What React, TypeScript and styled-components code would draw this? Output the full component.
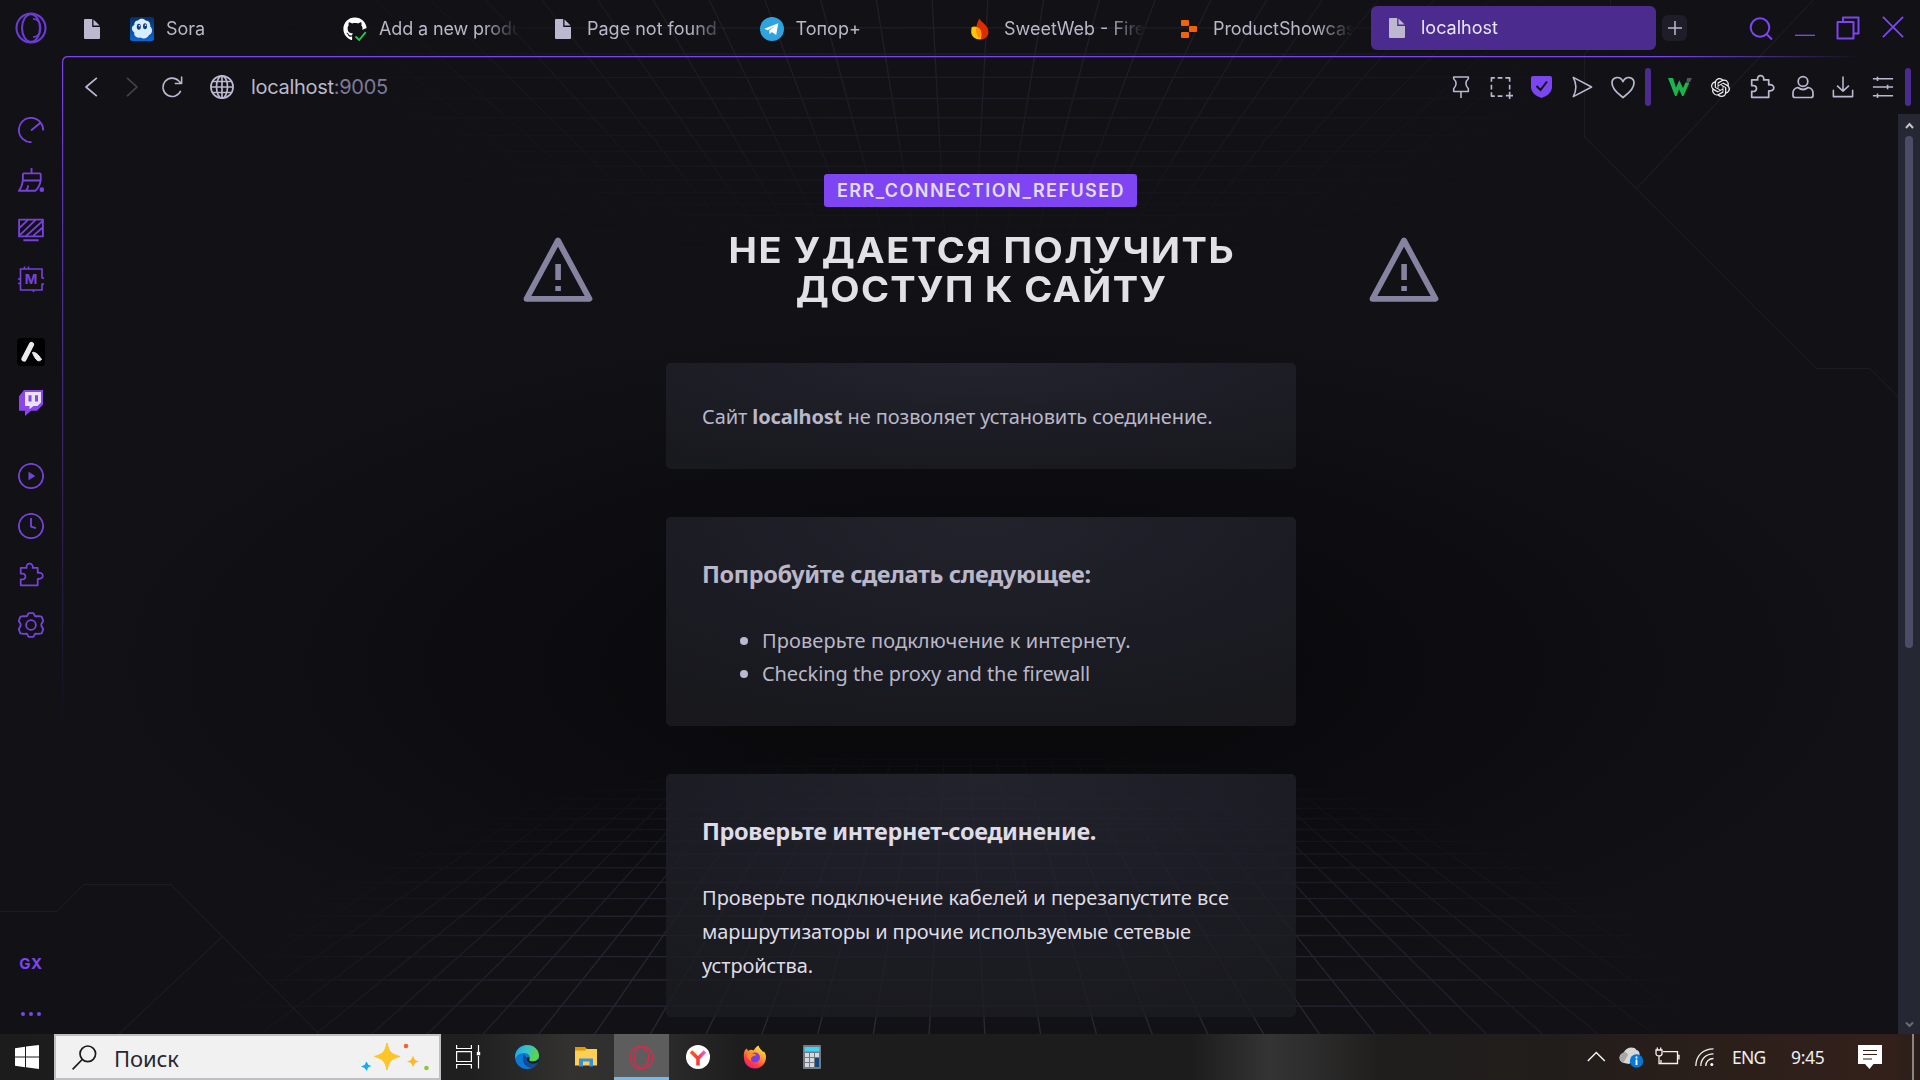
import React from 'react';
import styled, { createGlobalStyle, css } from 'styled-components';
import { FaGithub } from 'react-icons/fa';
import { SiOpenai } from 'react-icons/si';

const violet = '#7b45f2';
const silver = '#bbb8cf';
const ui = "Inter, 'Liberation Sans', sans-serif";
const body = "'Noto Sans', 'Open Sans', sans-serif";

const Global = createGlobalStyle`
  html, body { margin: 0; padding: 0; background: #121116; overflow: hidden; }
  * { box-sizing: border-box; }
  svg { display: block; flex: none; }
`;

const Screen = styled.div`
  position: relative;
  width: 1920px;
  height: 1080px;
  display: flex;
  flex-direction: column;
  overflow: hidden;
  background: #121116;
  font-family: ${ui};
`;

const Backdrop = styled.svg`
  position: absolute;
  left: 0;
  top: 0;
`;

const TabBar = styled.header`
  position: relative;
  display: flex;
  height: 56px;
  flex: none;
  padding: 6px 16px 0 15px;
  align-items: flex-start;
`;

const LogoButton = styled.div`
  width: 65px;
  padding-top: 6px;
`;

const PinnedTab = styled.div`
  width: 50px;
  height: 46px;
  padding-left: 4px;
  display: flex;
  align-items: center;
`;

const Tab = styled.div<{ $w: number; $active?: boolean }>`
  width: ${p => p.$w}px;
  height: ${p => (p.$active ? 44 : 46)}px;
  display: flex;
  align-items: center;
  gap: 12px;
  ${p =>
    p.$active &&
    css`
      background: #4c2b8f;
      border-radius: 6px;
      padding-left: 14px;
    `}
`;

const TabIcon = styled.div`
  width: 24px;
  height: 24px;
  display: flex;
  align-items: center;
  justify-content: center;
`;

const TabTitle = styled.span<{ $active?: boolean; $ls?: number }>`
  width: ${p => (p.$active ? 200 : 140)}px;
  flex: none;
  white-space: nowrap;
  font-size: 18px;
  line-height: 24px;
  letter-spacing: ${p => p.$ls ?? 0}px;
  color: ${p => (p.$active ? '#e9e6f5' : '#b9b7c8')};
  mask-image: linear-gradient(90deg, #000 calc(100% - 36px), transparent);
`;

const NewTab = styled.div`
  width: 25px;
  height: 26px;
  margin: 9px 0 0 6px;
  border-radius: 6px;
  background: #1e1d28;
  display: flex;
  align-items: center;
  justify-content: center;
`;

const WindowControls = styled.div`
  display: flex;
  margin-left: auto;
  padding-top: 10px;
  gap: 21.6px;
`;

const Middle = styled.div`
  position: relative;
  display: flex;
  height: 978px;
  flex: none;
`;

const Sidebar = styled.nav`
  width: 62px;
  padding-top: 61px;
  display: flex;
  flex-direction: column;
  align-items: center;
`;

const SideItem = styled.div<{ $h?: number }>`
  height: ${p => p.$h ?? 50}px;
  width: 30px;
  flex: none;
  display: flex;
  align-items: flex-start;
  justify-content: center;
`;

const SideLabel = styled.div`
  margin-top: auto;
  font: 700 15px/16px ${ui};
  letter-spacing: 0.6px;
  color: ${violet};
`;

const Dots = styled.div`
  display: flex;
  gap: 3.5px;
  padding: 40px 0 18px;
  i { width: 4.4px; height: 4.4px; border-radius: 50%; background: ${violet}; }
`;

const Frame = styled.svg`
  position: absolute;
  left: 62px;
  top: 0;
`;

const Page = styled.main`
  flex: 1;
  display: flex;
  flex-direction: column;
`;

const Toolbar = styled.div`
  height: 58px;
  flex: none;
  display: flex;
  align-items: center;
  padding: 4px 9px 0 19px;
`;

const Address = styled.div`
  flex: 1;
  margin-left: -11px;
  padding-bottom: 1px;
  font-size: 20px;
  line-height: 26px;
  letter-spacing: -0.3px;
  color: #bbb9cc;
  span { color: #7d7a99; }
`;

const ToolSlot = styled.div<{ $w: number }>`
  width: ${p => p.$w}px;
  display: flex;
  justify-content: center;
`;

const Separator = styled.div`
  width: 6px;
  height: 38px;
  border-radius: 3px;
  background: #4c2b8f;
`;

const Viewport = styled.div`
  flex: 1;
  display: flex;
  min-height: 0;
`;

const Content = styled.section`
  width: 1836px;
  display: flex;
  flex-direction: column;
  align-items: center;
  padding: 60px 0 0 2px;
`;

const ErrorCode = styled.div`
  width: 313px;
  height: 33px;
  margin-right: 1px;
  border-radius: 3px;
  background: #7f45f3;
  color: #e2dcf7;
  font: 600 18px/34px ${ui};
  letter-spacing: 1.44px;
  text-indent: 1px;
  text-align: center;
  white-space: nowrap;
`;

const Hero = styled.div`
  width: 916px;
  margin-top: 24px;
  display: flex;
  align-items: flex-start;
  justify-content: space-between;
`;

const AlertSlot = styled.div`
  padding-top: 6px;
`;

const Title = styled.h1`
  margin: 0;
  display: flex;
  flex-direction: column;
  align-items: center;
  font: 700 35.5px/39px ${ui};
  color: #e2e1e8;
  white-space: nowrap;
`;

const TitleLine = styled.span<{ $ls: number }>`
  letter-spacing: ${p => p.$ls}px;
  margin-right: -${p => p.$ls}px;
  transform: scaleX(1.07);
`;

const Cards = styled.div`
  margin-top: 54px;
  display: flex;
  flex-direction: column;
  gap: 48px;
`;

const Card = styled.article<{ $h: number; $bright?: boolean }>`
  width: 630px;
  height: ${p => p.$h}px;
  border-radius: 5px;
  padding: 0 36px;
  background: radial-gradient(ellipse 80% 105% at 50% 0%, rgba(40, 40, 51, 0.82), rgba(32, 32, 42, 0.82) 55%, rgba(27, 28, 33, 0.82) 100%);
  color: ${p => (p.$bright ? '#dedce6' : '#b9b7c8')};
  font: 400 20px/34px ${body};
  white-space: nowrap;
`;

const CardTitle = styled.h2<{ $ls: number }>`
  margin: 0;
  padding-top: 40px;
  font: 700 23.5px/34px ${body};
  letter-spacing: ${p => p.$ls}px;
`;

const Line = styled.div<{ $ls: number; $top?: number }>`
  padding-top: ${p => p.$top ?? 0}px;
  letter-spacing: ${p => p.$ls}px;
`;

const Tips = styled.ul`
  list-style: none;
  margin: 33px 0 0;
  padding: 0 0 0 38px;
`;

const Tip = styled.li<{ $ls: number }>`
  display: flex;
  align-items: center;
  gap: 14px;
  height: 33px;
  letter-spacing: ${p => p.$ls}px;
  &::before { content: ''; width: 8px; height: 8px; border-radius: 50%; background: ${silver}; }
`;

const Scrollbar = styled.div`
  width: 22px;
  background: #252733;
  display: flex;
  flex-direction: column;
  align-items: center;
  padding: 7px 0 5px;
`;

const Thumb = styled.div`
  width: 8px;
  height: 512px;
  margin: 6px 0 auto;
  border-radius: 4px;
  background: #4b4d66;
`;

const Taskbar = styled.footer`
  position: relative;
  height: 46px;
  flex: none;
  display: flex;
  align-items: stretch;
  background: linear-gradient(90deg, #1d1c1c 0, #1f1f1f 470px, #333231 570px, #2c2c2c 660px, #1d1d1d 740px, #1c1c1c 1190px, #343434 1270px, #2e2d2d 1310px, #1f1e1d 1380px, #211d1b 1560px, #2a1f1a 1700px, #33201a 1890px, #2a1e1a 1920px);
`;

const Start = styled.div`
  width: 54px;
  padding: 11px 0 0 15px;
`;

const SearchBox = styled.div`
  width: 387px;
  border: 2px solid #bfbec0;
  background: #f1f1f1;
  display: flex;
  align-items: center;
  padding: 0 8px 0 16px;
  font: 400 22px/30px ${body};
  letter-spacing: -0.1px;
  color: #29282c;
  span { flex: 1; padding: 1px 0 0 17px; }
`;

const TaskItem = styled.div<{ $w: number; $open?: boolean }>`
  width: ${p => p.$w}px;
  display: flex;
  align-items: center;
  justify-content: center;
  ${p =>
    p.$open &&
    css`
      background: #5d5d5d;
      border-bottom: 3px solid #76b9ed;
      padding-top: 3px;
    `}
`;

const Tray = styled.div`
  margin-left: auto;
  display: flex;
  align-items: center;
  color: #f1efee;
  font: 400 17.5px/24px ${body};
`;

const TrayText = styled.span<{ $w: number; $ls: number }>`
  width: ${p => p.$w}px;
  letter-spacing: ${p => p.$ls}px;
  white-space: nowrap;
`;

const ShowDesktop = styled.div`
  width: 8px;
  height: 46px;
  border-left: 2px solid #8c8480;
`;

const rows = Array.from({ length: 20 }, (_, i) => 1 / (0.001915 + i * 0.000113));
const cols = Array.from({ length: 44 }, (_, i) => i - 21.5);

function PerspectiveGrid({ cx, horizon, dir }: { cx: number; horizon: number; dir: 1 | -1 }) {
  const far = horizon + dir * 180;
  const near = horizon + dir * 525;
  return (
    <g stroke="#2b2938" strokeWidth="1.4" fill="none">
      {cols.map(c => (
        <line key={c} x1={cx + c * 0.107 * 180} y1={far} x2={cx + c * 0.107 * 525} y2={near} />
      ))}
      {rows.map(r => (
        <line key={r} x1="0" x2="1920" y1={horizon + dir * r} y2={horizon + dir * r} />
      ))}
    </g>
  );
}

function Background() {
  return (
    <Backdrop width="1920" height="1034" viewBox="0 0 1920 1034">
      <defs>
        <radialGradient id="dark" gradientUnits="userSpaceOnUse" cx="0" cy="0" r="1" gradientTransform="translate(985 665) scale(900 350)">
          <stop offset="0" stopColor="#09090c" />
          <stop offset=".3" stopColor="#0a0a0d" />
          <stop offset=".65" stopColor="#0e0d12" />
          <stop offset="1" stopColor="#121116" />
        </radialGradient>
        <radialGradient id="fadeTop" gradientUnits="userSpaceOnUse" cx="0" cy="0" r="1" gradientTransform="translate(960 0) scale(680 270)">
          <stop offset="0" stopColor="#fff" stopOpacity=".6" />
          <stop offset=".35" stopColor="#fff" stopOpacity=".5" />
          <stop offset="1" stopColor="#fff" stopOpacity="0" />
        </radialGradient>
        <radialGradient id="fadeBottom" gradientUnits="userSpaceOnUse" cx="0" cy="0" r="1" gradientTransform="translate(960 1034) scale(760 290)">
          <stop offset="0" stopColor="#fff" />
          <stop offset=".5" stopColor="#fff" stopOpacity=".85" />
          <stop offset="1" stopColor="#fff" stopOpacity="0" />
        </radialGradient>
        <mask id="maskTop" maskUnits="userSpaceOnUse" x="0" y="0" width="1920" height="400">
          <rect width="1920" height="400" fill="url(#fadeTop)" />
        </mask>
        <mask id="maskBottom" maskUnits="userSpaceOnUse" x="0" y="700" width="1920" height="334">
          <rect y="700" width="1920" height="334" fill="url(#fadeBottom)" />
        </mask>
      </defs>
      <rect width="1920" height="1034" fill="#121116" />
      <rect x="63" y="114" width="1835" height="920" fill="url(#dark)" />
      <g mask="url(#maskTop)">
        <PerspectiveGrid cx={960} horizon={521} dir={-1} />
      </g>
      <g mask="url(#maskBottom)">
        <PerspectiveGrid cx={957} horizon={513} dir={1} />
      </g>
      <g fill="none" stroke="#1c1b22" strokeWidth="1.2">
        <path d="M0 911.5H57L84 884.5H171L319 1034M222 937L119 1034" />
        <path d="M1610.500 0V27L1584.500 54V137L1816 368.500H1870L1898 397M1637 188L1813 0" />
      </g>
    </Backdrop>
  );
}

function OperaMark({ size, color, w }: { size: number; color: string; w: number }) {
  return (
    <svg width={size} height={size} viewBox="0 0 32 32" fill="none" stroke={color} strokeWidth={w}>
      <circle cx="16" cy="16" r="14.500" />
      <ellipse cx="16" cy="16" rx="9" ry="13.800" />
      <path d="M17 6.800C22 7 24.500 11 24.500 16S22 25 17 25.200" transform="translate(1 0)" strokeWidth={w * 0.85} />
    </svg>
  );
}

const FileIcon = () => (
  <svg width="16" height="20" viewBox="0 0 16 20" fill={silver}>
    <path d="M1 0H8.200V8H16V19A1 1 0 0 1 15 20H1A1 1 0 0 1 0 19V1A1 1 0 0 1 1 0Z" />
    <path d="M9.500 .5V6.600H15.600Z" />
  </svg>
);

type IconProps = { children: React.ReactNode; s?: number; c?: string; w?: number };
const Stroke = ({ children, s = 24, c = silver, w = 1.7 }: IconProps) => (
  <svg width={s} height={s} viewBox="0 0 24 24" fill="none" stroke={c} strokeWidth={w} strokeLinejoin="round">
    {children}
  </svg>
);

const Puzzle = ({ c, s = 26 }: { c: string; s?: number }) => (
  <Stroke c={c} s={s} w={1.6}>
    <path d="M2.500 5.500H8C7.400 2.800 9 1.600 10.700 1.600S14.200 2.800 13.500 5.500H18.200V10C21 9.500 22.900 10.800 22.900 12.800S21 16 18.200 15.500V21.500H2.500V16C5.200 16.600 6.900 15.300 6.900 13.300S5.200 10.300 2.500 10.800Z" />
  </Stroke>
);

const Alert = () => (
  <svg width="70" height="65" viewBox="0 0 70 65">
    <path d="M35 3.500L66.500 61.800H3.500Z" fill="none" stroke="#8683a1" strokeWidth="5.800" strokeLinejoin="round" />
    <path d="M32.300 27H37.900V43H32.300ZM32.300 49H37.900V54H32.300Z" fill="#8683a1" />
  </svg>
);

const Chevron = ({ down }: { down?: boolean }) => (
  <svg width="9" height="9" viewBox="0 0 9 9" fill="none" stroke={down ? '#696a72' : '#c4c2cb'} strokeWidth="2">
    <path d={down ? 'M1 2.500L4.500 6L8 2.500' : 'M1 7L4.500 3L8 7'} />
  </svg>
);

export default function App() {
  return (
    <Screen>
      <Global />
      <Background />
      <TabBar>
        <LogoButton><OperaMark size={32} color="#6b3bd2" w={2.1} /></LogoButton>
        <PinnedTab><FileIcon /></PinnedTab>
        <Tab $w={213}>
          <TabIcon>
            <svg width="24" height="24" viewBox="0 0 24 24">
              <defs><linearGradient id="sora" x2="0" y2="1"><stop stopColor="#063069" /><stop offset="1" stopColor="#0868d2" /></linearGradient></defs>
              <rect width="24" height="24" rx="2.500" fill="url(#sora)" />
              <path d="M8 3.500C9.500 1.300 14 1.200 15.500 3.600C19 3.500 20.500 6.500 20.300 9.500C23 12 22.500 17 19 18C17.500 21.500 13.500 22.500 10.500 20.500C6.500 21.500 3.500 18.500 4.300 15.500C.8 13 1.500 9 4.300 8C4 5.500 5.500 3.500 8 3.500Z" fill="#d9edff" />
              <ellipse cx="8.800" cy="9.800" rx="2" ry="3" fill="#0b3f7d" /><ellipse cx="15" cy="9.200" rx="2" ry="3" fill="#0b3f7d" />
              <circle cx="9.300" cy="8.800" r=".8" fill="#fff" /><circle cx="15.500" cy="8.200" r=".8" fill="#fff" />
            </svg>
          </TabIcon>
          <TabTitle>Sora</TabTitle>
        </Tab>
        <Tab $w={208}>
          <TabIcon>
            <svg width="24" height="24" viewBox="0 0 24 24">
              <FaGithub size={24} color="#fff" />
              <path d="M11 18L16 24H24V11L21 12Z" fill="#121116" />
              <path d="M12.500 19.500L16.200 23L22.700 15.200" fill="none" stroke="#2fc455" strokeWidth="1.800" />
            </svg>
          </TabIcon>
          <TabTitle $ls={-0.12}>Add a new produ</TabTitle>
        </Tab>
        <Tab $w={208.5}><TabIcon><FileIcon /></TabIcon><TabTitle>Page not found ·</TabTitle></Tab>
        <Tab $w={208.5}>
          <TabIcon>
            <svg width="24" height="24" viewBox="0 0 24 24">
              <circle cx="12" cy="12" r="12" fill="#2fa3df" />
              <path d="M4.300 11.800L18.300 6.300L16.200 17.900L11.800 15L9.700 17.200L9.200 13.600L15 9L7.800 13.300Z" fill="#fff" />
            </svg>
          </TabIcon>
          <TabTitle>Топор+</TabTitle>
        </Tab>
        <Tab $w={209}>
          <TabIcon>
            <svg width="24" height="24" viewBox="0 0 24 24">
              <path d="M11.500 1.500C12 4.500 20.500 8 20.500 15C20.500 19.500 17 22.500 12.500 22.500L7 18C7.500 12 9 5 11.500 1.500Z" fill="#dd2c00" />
              <path d="M3.500 10.500C6 8.500 10.500 10 12.500 13C14 16 13.500 20 12.500 22.500C7 22.500 3.200 19.500 3.200 15Z" fill="#ffc400" />
              <path d="M8.500 10.300C10.500 11 13 13 13 16C13 19 12 20.500 11 21.500C8 18 7.500 14 8.500 10.300Z" fill="#ff9100" />
            </svg>
          </TabIcon>
          <TabTitle>SweetWeb - Fire</TabTitle>
        </Tab>
        <Tab $w={194}>
          <TabIcon>
            <svg width="16" height="18" viewBox="0 0 16 18" fill="#f26207">
              <rect y="0" width="8" height="6" rx="1" /><rect x="8" y="6" width="8" height="6" rx="1" /><rect y="12" width="8" height="6" rx="1" />
            </svg>
          </TabIcon>
          <TabTitle $ls={-0.1}>ProductShowcas</TabTitle>
        </Tab>
        <Tab $w={285} $active><TabIcon><FileIcon /></TabIcon><TabTitle $active>localhost</TabTitle></Tab>
        <NewTab><Stroke s={14} w={2.6}><path d="M12 0V24M0 12H24" /></Stroke></NewTab>
        <WindowControls>
          <Stroke c={violet} s={24} w={2}><circle cx="11" cy="11.500" r="9.300" /><path d="M17.500 18L23 23.500" /></Stroke>
          <Stroke c={violet} s={20} w={2.2}><path d="M0 23.500H24" /></Stroke>
          <Stroke c={violet} s={24} w={2}><path d="M1.500 6H17.500V22.500H1.500ZM7 6V1.500H22.500V17.500H18" /></Stroke>
          <Stroke c={violet} s={22} w={2}><path d="M1 1L23 23M23 1L1 23" /></Stroke>
        </WindowControls>
      </TabBar>
      <Middle>
        <Frame width="1858" height="700" viewBox="0 0 1858 700" fill="none">
          <defs>
            <linearGradient id="edgeH" gradientUnits="userSpaceOnUse" x1="1600" x2="1800"><stop stopColor={violet} /><stop offset="1" stopColor={violet} stopOpacity="0" /></linearGradient>
            <linearGradient id="edgeV" gradientUnits="userSpaceOnUse" x1="0" x2="0" y1="0" y2="680"><stop stopColor={violet} /><stop offset=".25" stopColor={violet} stopOpacity=".65" /><stop offset="1" stopColor={violet} stopOpacity="0" /></linearGradient>
          </defs>
          <path d="M6 .6H1858" stroke="url(#edgeH)" strokeWidth="1.300" />
          <path d="M6 .6Q.8 .6 .6 6V700" stroke="url(#edgeV)" strokeWidth="1.200" />
        </Frame>
        <Sidebar>
          <SideItem $h={50.5}>
            <Stroke c="#7642dc" s={26}><path d="M12.500 23.200A11.200 11.200 0 1 1 23.200 12.500M12 12.500L20.500 5.500" /></Stroke>
          </SideItem>
          <SideItem $h={50}>
            <Stroke c="#7642dc" s={26}><path d="M12.500 0V5M5.500 5H20Q21 5 21 6V11.500H4.500V6Q4.500 5 5.500 5ZM4.500 11.500C4 15 2.500 19 .8 21H16C18.500 19 20.300 15.500 21 11.500M7.500 21Q9 19 9.500 16" /><circle cx="22" cy="20" r="1.300" fill="#7642dc" /></Stroke>
          </SideItem>
          <SideItem $h={48.5}>
            <Stroke c="#7642dc" s={26}><path d="M1 1.500H23V17H1ZM5 20.500H19M1.500 9L9 2M2 15.500L16 2M7.500 16.500L22.500 3M14 16.500L22.500 9" /></Stroke>
          </SideItem>
          <SideItem $h={72}>
            <svg width="26" height="26" viewBox="0 0 26 26" fill="none" stroke="#7642dc" strokeWidth="1.600">
              <path d="M23.500 12H26M23.500 18H26M24 12V3H2.500V24H24V18M6.500 .5V3M10.500 .5V3M0 13H2.500M0 17.500H2.500M15.500 24V26" />
              <text x="13" y="18.200" textAnchor="middle" fontFamily="Inter" fontSize="13.500" fontWeight="700" fill="#7642dc" stroke="none">M</text>
            </svg>
          </SideItem>
          <SideItem $h={52}>
            <svg width="28" height="28" viewBox="0 0 28 28"><rect width="28" height="28" rx="4" fill="#000" /><path d="M14.500 6.500L7 21" stroke="#eceaea" strokeWidth="5.200" strokeLinecap="round" /><path d="M15.500 14.500C18 13.500 21.500 16.500 24.500 21.500C21.500 24.500 18.500 22.500 15.500 14.500Z" fill="#eceaea" stroke="#eceaea" strokeLinejoin="round" /></svg>
          </SideItem>
          <SideItem $h={72.5}>
            <svg width="24" height="26" viewBox="0 0 24 25" preserveAspectRatio="none"><path d="M0 6L5 0H24V14L18 20H12L6 25V20H0Z" fill="#8a45ec" /><path d="M6 2H22V12L18.500 15.500H14.500L10.500 18.500V15.500H6Z" fill="#e8e3f2" /><path d="M11 5V11M17.500 5V11" stroke="#8a45ec" strokeWidth="3" /></svg>
          </SideItem>
          <SideItem>
            <Stroke c="#7642dc" s={26}><circle cx="12" cy="12" r="11.200" /><path d="M10 8.500V15.500L15.500 12Z" fill="#7642dc" strokeWidth=".6" /></Stroke>
          </SideItem>
          <SideItem $h={49}>
            <Stroke c="#7642dc" s={26}><circle cx="12" cy="12" r="11.200" /><path d="M12 4.500V12.500L16.500 14" /></Stroke>
          </SideItem>
          <SideItem $h={50}><Puzzle c="#7642dc" /></SideItem>
          <SideItem>
            <Stroke c="#7642dc" s={26}><circle cx="12" cy="12" r="4.500" /><path d="M9.800 1H14.200L15.800 3.900L19 3.800L21.800 4.200L23.300 8.200L21.600 11V13L23.300 15.800L21.800 19.800L18.800 20.200L15.800 20.100L14.200 23H9.800L8.200 20.100L5.200 20.200L2.200 19.800L.7 15.800L2.400 13V11L.7 8.200L2.200 4.200L5.200 3.800L8.200 3.900Z" /></Stroke>
          </SideItem>
          <SideLabel>GX</SideLabel>
          <Dots><i /><i /><i /></Dots>
        </Sidebar>
        <Page>
          <Toolbar>
            <ToolSlot $w={20}><Stroke s={20} w={2}><path d="M19 1L6 12L19 23" /></Stroke></ToolSlot>
            <ToolSlot $w={61}><Stroke s={20} w={2} c="#45444e"><path d="M6 1L18 12L6 23" /></Stroke></ToolSlot>
            <ToolSlot $w={19}><Stroke s={22}><path d="M21.500 16A10 10 0 1 1 19.500 5.500L22 8M22.500 .5V8.200H15" /></Stroke></ToolSlot>
            <ToolSlot $w={81}><Stroke s={24} w={1.7}><circle cx="12" cy="12" r="11.100" /><ellipse cx="12" cy="12" rx="5.500" ry="11.100" /><path d="M12 1V23M1 12H23M2.800 6.500H21.200M2.800 17.500H21.200" /></Stroke></ToolSlot>
            <Address>localhost<span>:9005</span></Address>
            <ToolSlot $w={41}><Stroke s={22}><path d="M4 1H20V3C16.500 6 16.500 10 20 14V17H4V14C7.500 10 7.500 6 4 3ZM12 17V24.500" /></Stroke></ToolSlot>
            <ToolSlot $w={40}><Stroke s={23}><path d="M1.500 6V2H5M8 2H13M16 2H20.500V6M20.500 9V14M1.500 9V14M1.500 17V21H5M8 21H13M20.500 16.500V24M16.500 20.500H24" /></Stroke></ToolSlot>
            <ToolSlot $w={41}><svg width="21" height="22" viewBox="0 0 21 22"><path d="M2 0H19Q21 0 21 2V12Q20 19 10.500 22Q1 19 0 12V2Q0 0 2 0Z" fill="#7b45f2" /><path d="M5.500 10L9.500 14L16 5.500" fill="none" stroke="#121116" strokeWidth="2" /></svg></ToolSlot>
            <ToolSlot $w={40}><Stroke s={22}><path d="M2.500 1.500L22.500 12L2.500 22.500C6.500 15 6.500 9 2.500 1.500Z" /></Stroke></ToolSlot>
            <ToolSlot $w={42}><Stroke s={24}><path d="M12 22.500C9 20 1 15 1 8C1 1.500 9 .5 12 6.500C15 .5 23 1.500 23 8C23 15 15 20 12 22.500Z" /></Stroke></ToolSlot>
            <ToolSlot $w={1} />
            <Separator />
            <ToolSlot $w={57}><svg width="24" height="18" viewBox="0 0 24 20" preserveAspectRatio="none"><path d="M0 0H5L8 10.500L11.300 2.500L15 11L17.500 5H21.500L15.500 20H14L11.200 12.500L8.500 20H7Z" fill="#1cb34c" /><path d="M19 0H24L22 4.500H18.500Z" fill="#55545a" /></svg></ToolSlot>
            <ToolSlot $w={24}><SiOpenai size={19} color="#f0eff2" /></ToolSlot>
            <ToolSlot $w={59}><Puzzle c={silver} /></ToolSlot>
            <ToolSlot $w={23}><Stroke s={24}><circle cx="12" cy="6.500" r="4.800" /><path d="M7 12.500Q2 13.500 2 18V20.500Q2 22.500 4 22.500H20Q22 22.500 22 20.500V18Q22 13.500 17 12.500Q12 16.500 7 12.500Z" /></Stroke></ToolSlot>
            <ToolSlot $w={57}><Stroke s={22}><path d="M12 .5V16M5.500 10.500L12 16.500L18.500 10.500M1.500 15V22.500H22.500V15" /></Stroke></ToolSlot>
            <ToolSlot $w={24}><Stroke s={22}><path d="M1 3H23M1 12H23M1 21.500H23M6 .8V5.500M17 9.500V14.500M6 19V24" /></Stroke></ToolSlot>
            <ToolSlot $w={10} />
            <Separator />
          </Toolbar>
          <Viewport>
            <Content>
              <ErrorCode>ERR_CONNECTION_REFUSED</ErrorCode>
              <Hero>
                <AlertSlot><Alert /></AlertSlot>
                <Title>
                  <TitleLine $ls={1.5}>НЕ УДАЕТСЯ ПОЛУЧИТЬ</TitleLine>
                  <TitleLine $ls={1.3}>ДОСТУП К САЙТУ</TitleLine>
                </Title>
                <AlertSlot><Alert /></AlertSlot>
              </Hero>
              <Cards>
                <Card $h={106}>
                  <Line $ls={-0.1} $top={37}>Сайт <b>localhost</b> не позволяет установить соединение.</Line>
                </Card>
                <Card $h={209}>
                  <CardTitle $ls={-0.34}>Попробуйте сделать следующее:</CardTitle>
                  <Tips>
                    <Tip $ls={0.08}>Проверьте подключение к интернету.</Tip>
                    <Tip $ls={-0.07}>Checking the proxy and the firewall</Tip>
                  </Tips>
                </Card>
                <Card $h={243} $bright>
                  <CardTitle $ls={-0.37}>Проверьте интернет-соединение.</CardTitle>
                  <Line $ls={0.02} $top={33}>Проверьте подключение кабелей и перезапустите все</Line>
                  <Line $ls={-0.07}>маршрутизаторы и прочие используемые сетевые</Line>
                  <Line $ls={-0.1}>устройства.</Line>
                </Card>
              </Cards>
            </Content>
            <Scrollbar><Chevron /><Thumb /><Chevron down /></Scrollbar>
          </Viewport>
        </Page>
      </Middle>
      <Taskbar>
        <Start>
          <svg width="24" height="24" viewBox="0 0 24 24" fill="#fff"><path d="M0 3.300L10 1.800V11.400H0ZM11 1.600L24 0V11.400H11ZM0 12.500H10V22.200L0 20.700ZM11 12.500H24V24L11 22.300Z" /></svg>
        </Start>
        <SearchBox>
          <svg width="25" height="25" viewBox="0 0 25 25" fill="none" stroke="#1b1a1c" strokeWidth="1.700"><circle cx="15.800" cy="8.800" r="7.800" /><path d="M10.200 14.500L.6 24.300" /></svg>
          <span>Поиск</span>
          <svg width="72" height="30" viewBox="0 0 72 30">
            <path d="M28 1C30 10 32 12 41 14.500C32 17 30 19 28 28C26 19 24 17 15.500 14.500C24 12 26 10 28 1Z" fill="#fdc526" stroke="#fdc526" />
            <path d="M54 13C55 17.500 56 18.500 60 19.500C56 20.500 55 21.500 54 25.500C53 21.500 52 20.500 48 19.500C52 18.500 53 17.500 54 13Z" fill="#fcb827" />
            <path d="M7.500 19.500L9.500 23L12.500 24L9 25.500L8 29L5.500 26L2 24.500L5.500 23Z" fill="#12aef0" />
            <circle cx="47" cy="4" r="2.300" fill="#f4652d" /><circle cx="67.500" cy="26" r="2.300" fill="#86c940" />
          </svg>
        </SearchBox>
        <TaskItem $w={55}>
          <svg width="25" height="24" viewBox="0 0 25 24" fill="none" stroke="#fff" strokeWidth="1.200"><path d="M.6 0V3.500H15.400V0M.6 6.600H15.400V16.500H.6ZM.6 23.500V19.500H15.400V23.500M22.500 0V7M22.500 11V23.500" /><rect x="21.400" y="7.500" width="2.200" height="2.200" fill="#fff" /></svg>
        </TaskItem>
        <TaskItem $w={61}>
          <svg width="24" height="24" viewBox="0 0 24 24">
            <defs><linearGradient id="edge" x2="1" y2=".4"><stop stopColor="#1ba0e8" /><stop offset=".5" stopColor="#35c1cf" /><stop offset="1" stopColor="#5ad745" /></linearGradient></defs>
            <circle cx="12" cy="12" r="12" fill="#0c7ad5" />
            <path d="M.2 10C1.500 3.500 7 0 12 0C19 0 24 5 24 10.500C24 14 21 16.500 17.500 16.500C14.500 16.500 13.500 15.500 14.500 14C16 11 13 8 9.500 8C5 8 1.500 10 .2 14Z" fill="url(#edge)" />
            <path d="M9 9.500C6 14 8 22 16.500 23C20 21.500 22 19.500 22.800 17.500C18 20 11 18.500 11.500 12.500Z" fill="#114a9c" />
            <path d="M14.500 14C13.500 15.500 14.500 16.500 17.500 16.500C20.500 16.500 22.500 15.500 23.500 13.500L24 16L22.800 17.500C18 20 12.500 18.500 11.500 14C12 11 14.500 11.500 14.500 14Z" fill="#1e1e1e" />
          </svg>
        </TaskItem>
        <TaskItem $w={57}>
          <svg width="22" height="20" viewBox="0 0 22 20"><path d="M0 0H10L12 2V4H0Z" fill="#dd9b04" /><path d="M0 3.500H10L11.500 2H22V18.500H0Z" fill="#fdd055" /><path d="M4 11.500H18V19.500H14.500V14.500H8V19.500H4Z" fill="#3a8fda" /></svg>
        </TaskItem>
        <TaskItem $w={55} $open><OperaMark size={25} color="#e0274c" w={1.4} /></TaskItem>
        <TaskItem $w={58}>
          <svg width="24" height="24" viewBox="0 0 24 24"><defs><linearGradient id="ya" x2="1"><stop stopColor="#ff5a1c" /><stop offset=".5" stopColor="#f43b3b" /><stop offset="1" stopColor="#f05bd0" /></linearGradient></defs><circle cx="12" cy="12" r="12" fill="#fff" /><path d="M5 6.500L12 13.500L19 6.500M12 13V20.500" fill="none" stroke="url(#ya)" strokeWidth="3.600" /></svg>
        </TaskItem>
        <TaskItem $w={56}>
          <svg width="24" height="24" viewBox="0 0 24 24">
            <defs><linearGradient id="fx" x1=".8" y1="0" x2=".2" y2="1"><stop stopColor="#fff04a" /><stop offset=".4" stopColor="#ff9a2a" /><stop offset=".75" stopColor="#ff3550" /><stop offset="1" stopColor="#e0218a" /></linearGradient></defs>
            <path d="M2 5L4 3.500L5 6C7 4.500 9 4.500 10.500 5.500C12 3.500 13 1.500 15.500 .5C16 3.500 19 5 20 7L21 6.500C23 9 23.500 12 22.500 15.500C21 20.500 17 23.500 12 23.500C6 23.500 1 19 1 13C.5 10 1 7 2 5Z" fill="url(#fx)" />
            <circle cx="12" cy="12.500" r="5" fill="#7a3fe0" /><path d="M4 8.500C7 7.500 10 8 13.500 10L9.500 11.500C8 12.500 7.500 14 8.500 16C5 14.500 4 12 4 8.500Z" fill="#ff8b20" />
          </svg>
        </TaskItem>
        <TaskItem $w={58}>
          <svg width="18" height="24" viewBox="0 0 18 24"><rect width="18" height="24" rx="1" fill="#737a83" /><rect x="1.500" y="2" width="15" height="4.500" fill="#43d3f4" /><path d="M2 8H6V12H2ZM7 8H11V12H7ZM12 8H16V12H12ZM2 13H6V17H2ZM7 13H11V17H7ZM2 18H6V22H2ZM7 18H11V22H7Z" fill="#d6dade" /><path d="M12 13H16V22H12Z" fill="#12477f" /></svg>
        </TaskItem>
        <Tray>
          <svg width="32" height="24" viewBox="0 0 32 24" fill="none" stroke="#f4f2f1" strokeWidth="1.500"><path d="M.8 16L9.300 7.500L17.800 16" /></svg>
          <svg width="36" height="24" viewBox="0 0 36 24"><path d="M5 18C-1 17 -1 9 4.500 8C7 2 15 1 17.500 5C20 5.500 21 8 20.500 10L10 19Z" fill="#d8d7d6" /><path d="M1 13C.5 7 8 5 9 10L4.500 17.800Q1.500 17 1 13Z" fill="#a9a7a5" /><circle cx="17.500" cy="16" r="6.700" fill="#0678d7" /><path d="M16.600 11.600H18.400V13.400H16.600ZM16.600 14.400H18.400V20H16.600Z" fill="#fff" /></svg>
          <svg width="40" height="24" viewBox="0 0 40 24" fill="none" stroke="#f4f2f1" strokeWidth="1.300"><path d="M8 6.600H22.500V18.500H6V15M22.500 10.500H24V14.500M1 5H7V8.500Q7 11 4 11Q1 11 1 8.500ZM2.300 5V2.500M5.700 5V2.500M4 11V18.500H8" /></svg>
          <svg width="37" height="24" viewBox="0 0 37 24" fill="none" stroke="#f4f2f1" strokeWidth="1.300"><path d="M.8 21C.8 11 8 3.800 18.500 3.800M5.800 21C5.800 14 11 8.800 18.500 8.800M10.800 21C10.800 16.500 14 13.500 18.500 13.500" /><circle cx="16.800" cy="19.500" r="1.500" fill="#fff" stroke="none" /></svg>
          <TrayText $w={59} $ls={-0.8}>ENG</TrayText>
          <TrayText $w={67} $ls={-0.3}>9:45</TrayText>
          <svg width="54" height="26" viewBox="0 0 54 26"><path d="M0 1H24V20H15.500L11.500 25L7 20H0Z" fill="#fff" /><path d="M5 6.500H19M5 10.500H19M5 15H14" stroke="#33201a" strokeWidth="1.200" /></svg>
          <ShowDesktop />
        </Tray>
      </Taskbar>
    </Screen>
  );
}
